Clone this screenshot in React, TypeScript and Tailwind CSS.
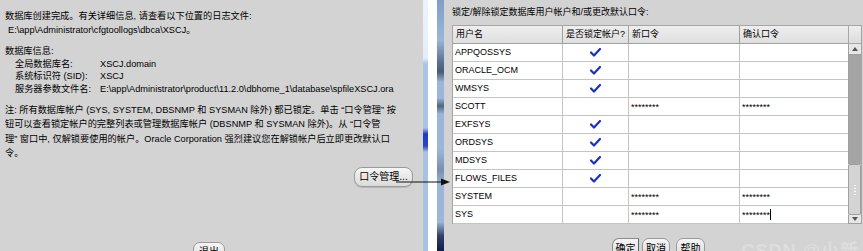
import React from 'react';

type Row = { name: string; locked: boolean; p?: string; c?: string; cursor?: boolean };

const rows: Row[] = [
  { name: 'APPQOSSYS', locked: true },
  { name: 'ORACLE_OCM', locked: true },
  { name: 'WMSYS', locked: true },
  { name: 'SCOTT', locked: false, p: '********', c: '********' },
  { name: 'EXFSYS', locked: true },
  { name: 'ORDSYS', locked: true },
  { name: 'MDSYS', locked: true },
  { name: 'FLOWS_FILES', locked: true },
  { name: 'SYSTEM', locked: false, p: '********', c: '********' },
  { name: 'SYS', locked: false, p: '********', c: '********', cursor: true },
];

function Check() {
  return (
    <svg width="11" height="9" viewBox="0 0 11 9">
      <path d="M1 4.5 L4 7.5 L10 1" fill="none" stroke="#1630c8" strokeWidth="2.2" strokeLinecap="round" strokeLinejoin="round" />
    </svg>
  );
}

export default function App() {
  return (
    <div className="relative flex h-[251px] w-[863px] overflow-hidden bg-[#d3d3d3] font-['Liberation_Sans','Noto_Sans_CJK_SC',sans-serif] text-black">
      {/* Left panel */}
      <div className="flex w-[423px] shrink-0 flex-col pt-[9px] text-[9.2px] leading-[14px]">
        <div className="whitespace-nowrap pl-[5px]">数据库创建完成。有关详细信息, 请查看以下位置的日志文件:</div>
        <div className="whitespace-nowrap pl-[8px]">E:\app\Administrator\cfgtoollogs\dbca\XSCJ。</div>
        <div className="mt-[8px] pl-[5px] leading-[12.5px]">数据库信息:</div>
        <div className="grid grid-cols-[85px_1fr] whitespace-nowrap pl-[15px] leading-[12.5px]">
          <span>全局数据库名:</span>
          <span>XSCJ.domain</span>
          <span>系统标识符 (SID):</span>
          <span>XSCJ</span>
          <span>服务器参数文件名:</span>
          <span>E:\app\Administrator\product\11.2.0\dbhome_1\database\spfileXSCJ.ora</span>
        </div>
        <div className="mt-[8px] whitespace-nowrap pl-[5px] leading-[14.3px]">
          <div>注: 所有数据库帐户 (SYS, SYSTEM, DBSNMP 和 SYSMAN 除外) 都已锁定。单击 “口令管理” 按</div>
          <div>钮可以查看锁定帐户的完整列表或管理数据库帐户 (DBSNMP 和 SYSMAN 除外)。从 “口令管</div>
          <div>理” 窗口中, 仅解锁要使用的帐户。Oracle Corporation 强烈建议您在解锁帐户后立即更改默认口</div>
          <div>令。</div>
        </div>
        <div className="mt-[7px] flex justify-end pr-[10px]">
          <div className="flex h-[20px] w-[59px] items-center justify-center rounded-[8px] border border-[#9a9a9a] bg-[linear-gradient(to_bottom,#f6f6f6,#dadada)] text-[10px] shadow-[0_1px_0_#b8b8b8]">
            口令管理...
          </div>
        </div>
        <div className="mt-[55px] flex justify-center pr-[5px]">
          <div className="flex h-[20px] w-[32px] items-center justify-center rounded-[7px] border border-[#9a9a9a] bg-[linear-gradient(to_bottom,#f6f6f6,#dadada)] text-[10px]">
            退出
          </div>
        </div>
      </div>

      {/* Divider */}
      <div className="flex w-[21px] shrink-0">
        <div className="w-[5px] bg-[linear-gradient(to_bottom,#eef3f9_0px,#e4edf7_58px,#aac4e3_64px,#aac4e3_128px,#1f3cc0_134px,#2a48c4_146px,#a8c2e2_152px,#a8c2e2_100%)]" />
        <div className="w-[9px] bg-white" />
        <div className="w-[7px] bg-[linear-gradient(to_bottom,#7f9fc8_0px,#9ab6da_40px,#5a7090_62px,#4a5a78_72px,#9ab6da_82px,#9ab6da_98px,#506480_106px,#9ab6da_114px,#9ab6da_150px,#7890b0_170px,#9ab6da_185px,#9ab6da_222px,#30406a_236px,#101c48_100%)]" />
      </div>

      {/* Right panel */}
      <div className="flex flex-1 flex-col pl-[8px] pt-[6px]">
        <div className="whitespace-nowrap text-[9px] leading-[12px]">锁定/解除锁定数据库用户帐户和/或更改默认口令:</div>
        <div className="mt-[7px] flex">
          <div className="w-[396px] border-l border-t border-[#a6a6a6] bg-white text-[9px]">
            <div className="grid h-[18px] grid-cols-[110px_66px_111px_109px] bg-[linear-gradient(to_bottom,#eeeeee,#dedede)]">
              {['用户名', '是否锁定帐户?', '新口令', '确认口令'].map((h) => (
                <div key={h} className="flex items-center border-b border-r border-[#a0a0a0] pl-[3px] whitespace-nowrap">
                  {h}
                </div>
              ))}
            </div>
            {rows.map((r) => (
              <div key={r.name} className="grid h-[18px] grid-cols-[110px_66px_111px_109px]">
                <div className="flex items-center border-b border-r border-[#c4c4c4] pl-[2px]">{r.name}</div>
                <div className="flex items-center justify-center border-b border-r border-[#c4c4c4]">{r.locked && <Check />}</div>
                <div className="flex items-center border-b border-r border-[#c4c4c4] pl-[2px] pt-[3px]">{r.p}</div>
                <div className="flex items-center border-b border-r border-[#c4c4c4] pl-[2px] pt-[3px]">
                  {r.c}
                  {r.cursor && <span className="-mt-[3px] inline-block h-[11px] w-[1px] bg-black" />}
                </div>
              </div>
            ))}
          </div>
          {/* Scrollbar */}
          <div className="flex w-[14px] flex-col border-r border-t border-[#a6a6a6] bg-[#d8d8d8]">
            <div className="h-[18px] border-b border-l border-[#a8a8a8] bg-[linear-gradient(to_bottom,#eeeeee,#dcdcdc)]" />
            <div className="flex h-[11px] items-center justify-center border-b border-l border-[#a0a0a0] bg-[#e6e6e6]">
              <svg width="6" height="4" viewBox="0 0 6 4"><path d="M0 4 L3 0 L6 4 Z" fill="#555" /></svg>
            </div>
            <div className="h-[109px] border-l border-[#a0a0a0] bg-[#a4a4a4]" />
            <div className="flex h-[51px] flex-col items-center justify-center gap-[2px] rounded-[2px] border border-[#a0a0a0] bg-[#d4d4d4]">
              <span className="h-[1px] w-[2px] bg-white" />
              <span className="h-[1px] w-[2px] bg-white" />
              <span className="h-[1px] w-[2px] bg-white" />
              <span className="h-[1px] w-[2px] bg-white" />
            </div>
            <div className="flex h-[9px] items-center justify-center border-b border-l border-[#a0a0a0] bg-[#e6e6e6]">
              <svg width="6" height="4" viewBox="0 0 6 4"><path d="M0 0 L3 4 L6 0 Z" fill="#555" /></svg>
            </div>
          </div>
        </div>
        <div className="mt-[14px] flex justify-center text-[10px]">
          <div className="ml-[2px] flex h-[20px] w-[27px] items-center justify-center rounded-l-[7px] border border-[#8c8c8c] border-r-[#606060] bg-[linear-gradient(to_bottom,#f6f6f6,#dadada)]">确定</div>
          <div className="ml-[3px] flex h-[20px] w-[28px] items-center justify-center rounded-[7px] border border-[#9a9a9a] bg-[linear-gradient(to_bottom,#f6f6f6,#dadada)]">取消</div>
          <div className="ml-[6px] flex h-[20px] w-[29px] items-center justify-center rounded-[7px] border border-[#9a9a9a] bg-[linear-gradient(to_bottom,#f6f6f6,#dadada)]">帮助</div>
        </div>
      </div>

      {/* Annotation arrow */}
      <svg className="absolute left-[396px] top-[177px]" width="56" height="10" viewBox="0 0 56 10">
        <line x1="0" y1="5" x2="46" y2="5" stroke="#111" strokeWidth="1.2" />
        <path d="M45 1.5 L54 5 L45 8.5 Z" fill="#111" />
      </svg>

      {/* Watermark */}
      <div className="absolute bottom-[-14px] right-[4px] whitespace-nowrap text-[18px] font-bold tracking-[1px] text-white/25">
        CSDN @小新
      </div>
    </div>
  );
}
